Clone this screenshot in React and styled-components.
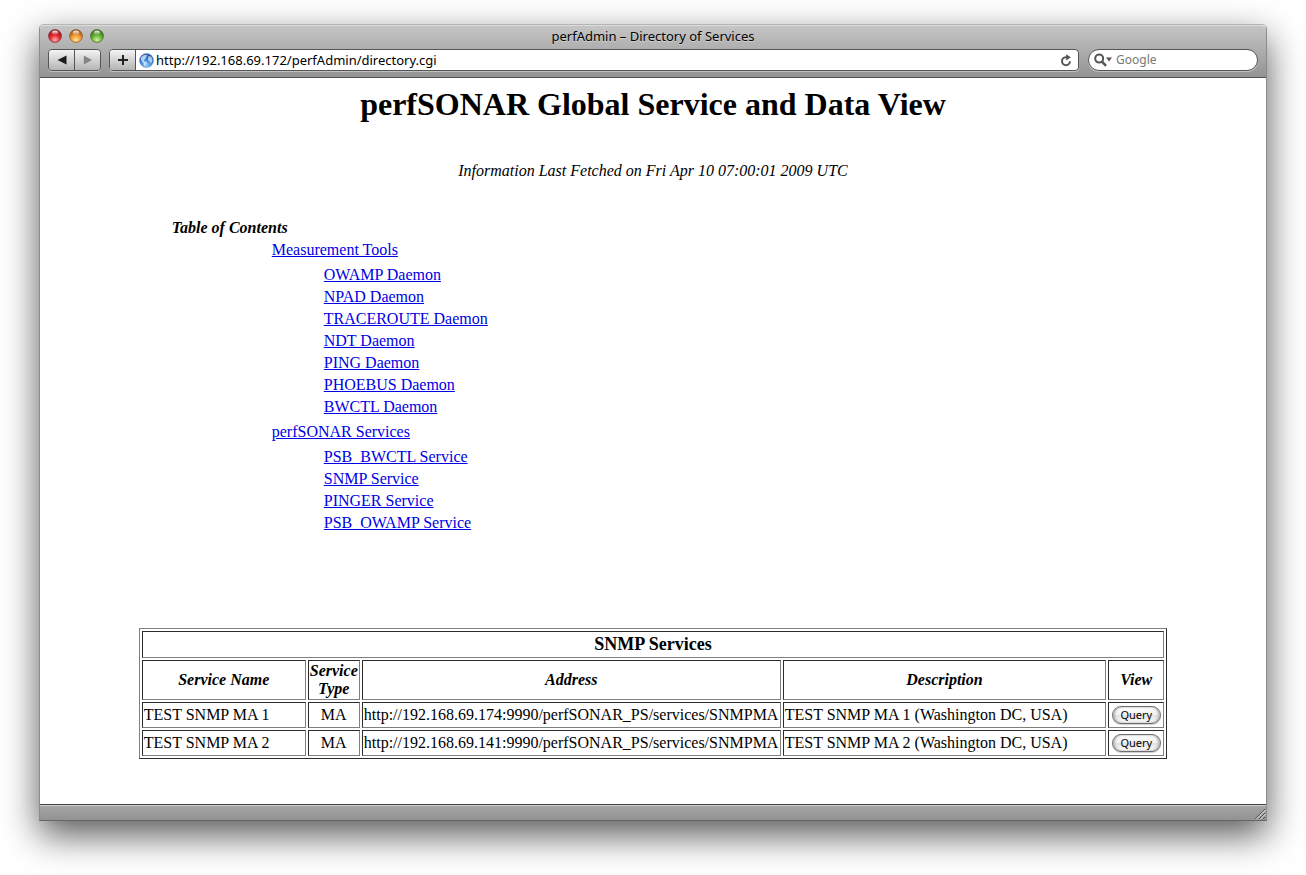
import React from "react";
import styled, { createGlobalStyle } from "styled-components";

const ui = `"Noto Sans", "Open Sans", sans-serif`;
const serif = `"Liberation Serif", "Times New Roman", serif`;

const GlobalStyle = createGlobalStyle`
  * { box-sizing: border-box; }
  body { margin: 0; background: #fff; overflow-x: hidden; }
`;

const Desktop = styled.div`
  display: flex;
  min-height: 100vh;
  padding: 24px 39px 54px;
  overflow: hidden;
`;

const Window = styled.div`
  flex: 1;
  min-width: 0;
  display: flex;
  flex-direction: column;
  border: 1px solid #8c8c8c;
  border-top-color: #b4b4b4;
  border-bottom-color: #666;
  border-radius: 5px 5px 0 0;
  background: #fff;
  box-shadow: 0 14px 36px rgba(0, 0, 0, 0.66);
`;

const Chrome = styled.header`
  border-radius: 4px 4px 0 0;
  border-top: 1px solid #dcdcdc;
  border-bottom: 1px solid #515151;
  background: linear-gradient(#c5c5c5, #939393);
  padding-bottom: 6px;
`;

const TitleRow = styled.div`
  display: grid;
  grid-template-columns: 72px 1fr 72px;
  align-items: center;
  height: 23px;
  padding-bottom: 4px;
`;

const Lights = styled.div`
  display: flex;
  gap: 7px;
  padding-left: 8px;
`;

const Light = styled.button`
  width: 14px;
  height: 14px;
  padding: 0;
  border: 0;
  background: transparent;
`;

const WindowTitle = styled.div`
  font: 13px/18px ${ui};
  text-align: center;
  white-space: nowrap;
  text-shadow: 0 1px 0 rgba(255, 255, 255, 0.4);
`;

const Toolbar = styled.div`
  display: flex;
  gap: 8px;
  padding: 0 8px;
`;

const frame = `
  display: flex;
  height: 22px;
  border: 1px solid #555;
  border-radius: 4px;
  overflow: hidden;
  box-shadow: 0 1px 0 rgba(255, 255, 255, 0.4);
`;

const NavGroup = styled.nav`
  ${frame}
`;

const ToolButton = styled.button`
  display: flex;
  align-items: center;
  justify-content: center;
  width: ${(p) => (p.$last ? "25px" : "26px")};
  padding: 0;
  border: 0;
  border-right: ${(p) => (p.$last ? "0" : "1px solid #555")};
  background: linear-gradient(#f4f4f4, #b4b4b4);
`;

const AddressBar = styled.form`
  ${frame}
  flex: 1;
  align-items: stretch;
  background: #fff;
`;

const SiteIcon = styled.span`
  display: flex;
  align-items: center;
  padding: 0 2px 0 3px;
`;

const AddressInput = styled.input`
  flex: 1;
  min-width: 0;
  padding: 0;
  border: 0;
  outline: 0;
  background: transparent;
  color: #000;
  font: 13px/20px ${ui};
`;

const ReloadButton = styled.button`
  display: flex;
  align-items: center;
  justify-content: center;
  width: 24px;
  padding: 0;
  border: 0;
  background: transparent;
`;

const SearchBox = styled.form`
  ${frame}
  align-items: center;
  width: 170px;
  margin-left: 1px;
  padding-left: 5px;
  gap: 4px;
  border-radius: 11px;
  background: #fff;
`;

const SearchInput = styled(AddressInput)`
  font-size: 12px;
  &::placeholder { color: #777; opacity: 1; }
`;

const Page = styled.main`
  flex: 1;
  padding: 8px 8px 40px;
  color: #000;
  font: 16px/22px ${serif};
`;

const Heading = styled.h1`
  margin: 0;
  font-size: 32px;
  line-height: 36px;
  text-align: center;
`;

const Fetched = styled.p`
  margin: 38px 0 35px;
  font-style: italic;
  text-align: center;
`;

const Contents = styled.nav`
  width: 85%;
  margin: 0 auto 94px;
  padding-left: 33px;
`;

const ContentsTitle = styled.h2`
  margin: 0;
  font-size: 16px;
  font-style: italic;
`;

const SectionList = styled.ul`
  margin: 0;
  padding: 0 0 0 100px;
  list-style: none;
`;

const ItemList = styled.ul`
  margin: 3px 0;
  padding: 0 0 0 52px;
  list-style: none;
`;

const Link = styled.a`
  color: #0000e5;
  text-decoration: underline;
`;

const Services = styled.table`
  width: 85%;
  margin: 0 auto;
  border: 1px solid;
  border-color: #808080 #2c2c2c #2c2c2c #808080;
  border-collapse: separate;
  border-spacing: 2px;
  font-size: 16px;
  line-height: 18px;
`;

const cell = `
  border: 1px solid;
  border-color: #2c2c2c #808080 #808080 #2c2c2c;
`;

const TitleCell = styled.th`
  ${cell}
  padding: 2px 1px;
  font-size: 18px;
  line-height: 21px;
`;

const HeadCell = styled.th`
  ${cell}
  width: ${(p) => p.$width || "auto"};
  padding: 1px;
  font-style: italic;
`;

const Cell = styled.td`
  ${cell}
  height: 26px;
  padding: 1px;
  text-align: ${(p) => (p.$center ? "center" : "left")};
  white-space: nowrap;
`;

const QueryButton = styled.button`
  display: block;
  width: 49px;
  height: 18px;
  margin: 0 auto;
  padding: 0;
  border: 1px solid #6e6e6e;
  border-radius: 9px;
  background: linear-gradient(#fff 0, #f1f1f1 48%, #e2e2e2 52%, #fbfbfb 100%);
  box-shadow: inset 2px 0 2px #bbb, inset -2px 0 2px #bbb, 0 1px 1px #ccc;
  color: #000;
  font: 11px/14px ${ui};
`;

const StatusBar = styled.footer`
  display: flex;
  justify-content: flex-end;
  align-items: flex-end;
  height: 16px;
  border-top: 1px solid #404040;
  background: linear-gradient(#d0d0d0 0, #d0d0d0 1px, #a5a5a5 1px, #929292 100%);
`;

const LightIcon = ({ id, base, glow, edge }) => (
  <svg width="14" height="14" viewBox="0 0 14 14" display="block" aria-hidden="true">
    <defs>
      <radialGradient id={`${id}-body`} cx="50%" cy="82%" r="75%">
        <stop offset="0" stopColor={glow} />
        <stop offset=".55" stopColor={base} />
        <stop offset="1" stopColor={edge} />
      </radialGradient>
      <linearGradient id={`${id}-shine`} x1="0" y1="0" x2="0" y2="1">
        <stop offset="0" stopColor="#fff" stopOpacity=".95" />
        <stop offset="1" stopColor="#fff" stopOpacity=".1" />
      </linearGradient>
    </defs>
    <circle cx="7" cy="7" r="6.4" fill={`url(#${id}-body)`} stroke={edge} strokeWidth=".9" strokeOpacity=".8" />
    <ellipse cx="7" cy="3.6" rx="3.2" ry="2.1" fill={`url(#${id}-shine)`} />
  </svg>
);

const BackIcon = () => (
  <svg width="10" height="10" viewBox="0 0 10 10" aria-hidden="true">
    <path d="M9.5 .5v9L.5 5z" fill="#1c1c1c" />
  </svg>
);

const ForwardIcon = () => (
  <svg width="10" height="10" viewBox="0 0 10 10" aria-hidden="true">
    <path d="M.8 .5v9L9 5z" fill="#858585" />
  </svg>
);

const PlusIcon = () => (
  <svg width="10" height="10" viewBox="0 0 10 10" aria-hidden="true">
    <path d="M4 0h2v4h4v2H6v4H4V6H0V4h4z" fill="#222" />
  </svg>
);

const GlobeIcon = () => (
  <svg width="15" height="15" viewBox="0 0 15 15" aria-hidden="true">
    <defs>
      <radialGradient id="globe" cx="50%" cy="85%" r="80%">
        <stop offset="0" stopColor="#86c8fa" />
        <stop offset=".55" stopColor="#3d80d2" />
        <stop offset="1" stopColor="#2450a0" />
      </radialGradient>
    </defs>
    <circle cx="7.5" cy="7.5" r="7" fill="url(#globe)" stroke="#6c8cc0" strokeWidth=".5" />
    <path d="M2 4.5 4.5 2.2 7.5 1.8 8.3 3 6.8 4.3 6.5 6 4.6 7 5.2 8.3 7.5 9 7.8 10.5 6.3 12.2 6.2 13.6 4.8 12.5 4.6 10.3 3 8.6 2 7z" fill="#e4f2ff" opacity=".75" />
    <path d="M9.5 3.2 12 3.6 13.4 6.3 12.9 9 11.7 10.6 10.8 8.2 9.3 7.4 9 5.3z" fill="#d3e9fd" opacity=".75" />
  </svg>
);

const ReloadIcon = () => (
  <svg width="12" height="13" viewBox="0 0 12 13" aria-hidden="true">
    <path d="M7 3.2H5.8A4 4 0 1 0 10 7.4" fill="none" stroke="#555" strokeWidth="2" />
    <path d="M6.2 .2 10.8 3.3 6.2 6.4z" fill="#555" />
  </svg>
);

const SearchIcon = () => (
  <svg width="18" height="14" viewBox="0 0 18 14" aria-hidden="true">
    <circle cx="5.2" cy="5.6" r="4" fill="none" stroke="#555" strokeWidth="2" />
    <path d="M8 8.6l4 4.2" stroke="#555" strokeWidth="2.4" />
    <path d="M12 4.5h6l-3 4z" fill="#555" />
  </svg>
);

const ResizeGrip = () => (
  <svg width="13" height="13" viewBox="0 0 13 13" aria-hidden="true">
    <path d="M2 12 12 2M6 12l6-6M10 12l2-2" stroke="#555" strokeWidth="1" />
    <path d="M3 12.5 12.5 3M7 12.5l5.5-5.5" stroke="#ddd" strokeWidth="1" />
  </svg>
);

const lights = [
  { name: "Close", base: "#e0242b", glow: "#ffb0ac", edge: "#8c1f22" },
  { name: "Minimize", base: "#f09431", glow: "#ffe890", edge: "#93551e" },
  { name: "Zoom", base: "#62b134", glow: "#d2f59a", edge: "#39681f" },
];

const sections = [
  {
    title: "Measurement Tools",
    items: ["OWAMP Daemon", "NPAD Daemon", "TRACEROUTE Daemon", "NDT Daemon", "PING Daemon", "PHOEBUS Daemon", "BWCTL Daemon"],
  },
  {
    title: "perfSONAR Services",
    items: ["PSB_BWCTL Service", "SNMP Service", "PINGER Service", "PSB_OWAMP Service"],
  },
];

const services = [
  { name: "TEST SNMP MA 1", type: "MA", address: "http://192.168.69.174:9990/perfSONAR_PS/services/SNMPMA", description: "TEST SNMP MA 1 (Washington DC, USA)" },
  { name: "TEST SNMP MA 2", type: "MA", address: "http://192.168.69.141:9990/perfSONAR_PS/services/SNMPMA", description: "TEST SNMP MA 2 (Washington DC, USA)" },
];

const anchor = (text) => "#" + text.replace(/\W+/g, "-").toLowerCase();

export default function App() {
  return (
    <Desktop>
      <GlobalStyle />
      <Window>
        <Chrome>
          <TitleRow>
            <Lights>
              {lights.map((l) => (
                <Light key={l.name} aria-label={l.name}>
                  <LightIcon id={l.name} base={l.base} glow={l.glow} edge={l.edge} />
                </Light>
              ))}
            </Lights>
            <WindowTitle>perfAdmin – Directory of Services</WindowTitle>
          </TitleRow>
          <Toolbar>
            <NavGroup aria-label="History">
              <ToolButton aria-label="Back"><BackIcon /></ToolButton>
              <ToolButton aria-label="Forward" $last><ForwardIcon /></ToolButton>
            </NavGroup>
            <AddressBar onSubmit={(e) => e.preventDefault()}>
              <ToolButton type="button" aria-label="Add bookmark"><PlusIcon /></ToolButton>
              <SiteIcon><GlobeIcon /></SiteIcon>
              <AddressInput aria-label="Address" defaultValue="http://192.168.69.172/perfAdmin/directory.cgi" />
              <ReloadButton type="button" aria-label="Reload"><ReloadIcon /></ReloadButton>
            </AddressBar>
            <SearchBox onSubmit={(e) => e.preventDefault()}>
              <SearchIcon />
              <SearchInput aria-label="Search" placeholder="Google" />
            </SearchBox>
          </Toolbar>
        </Chrome>
        <Page>
          <Heading>perfSONAR Global Service and Data View</Heading>
          <Fetched>Information Last Fetched on Fri Apr 10 07:00:01 2009 UTC</Fetched>
          <Contents aria-labelledby="toc">
            <ContentsTitle id="toc">Table of Contents</ContentsTitle>
            <SectionList>
              {sections.map((s) => (
                <li key={s.title}>
                  <Link href={anchor(s.title)}>{s.title}</Link>
                  <ItemList>
                    {s.items.map((item) => (
                      <li key={item}><Link href={anchor(item)}>{item}</Link></li>
                    ))}
                  </ItemList>
                </li>
              ))}
            </SectionList>
          </Contents>
          <Services>
            <thead>
              <tr><TitleCell colSpan={5}>SNMP Services</TitleCell></tr>
              <tr>
                <HeadCell scope="col" $width="164px">Service Name</HeadCell>
                <HeadCell scope="col" $width="51px">Service Type</HeadCell>
                <HeadCell scope="col" $width="419px">Address</HeadCell>
                <HeadCell scope="col">Description</HeadCell>
                <HeadCell scope="col" $width="56px">View</HeadCell>
              </tr>
            </thead>
            <tbody>
              {services.map((s) => (
                <tr key={s.name}>
                  <Cell>{s.name}</Cell>
                  <Cell $center>{s.type}</Cell>
                  <Cell>{s.address}</Cell>
                  <Cell>{s.description}</Cell>
                  <Cell $center><QueryButton>Query</QueryButton></Cell>
                </tr>
              ))}
            </tbody>
          </Services>
        </Page>
        <StatusBar><ResizeGrip /></StatusBar>
      </Window>
    </Desktop>
  );
}
